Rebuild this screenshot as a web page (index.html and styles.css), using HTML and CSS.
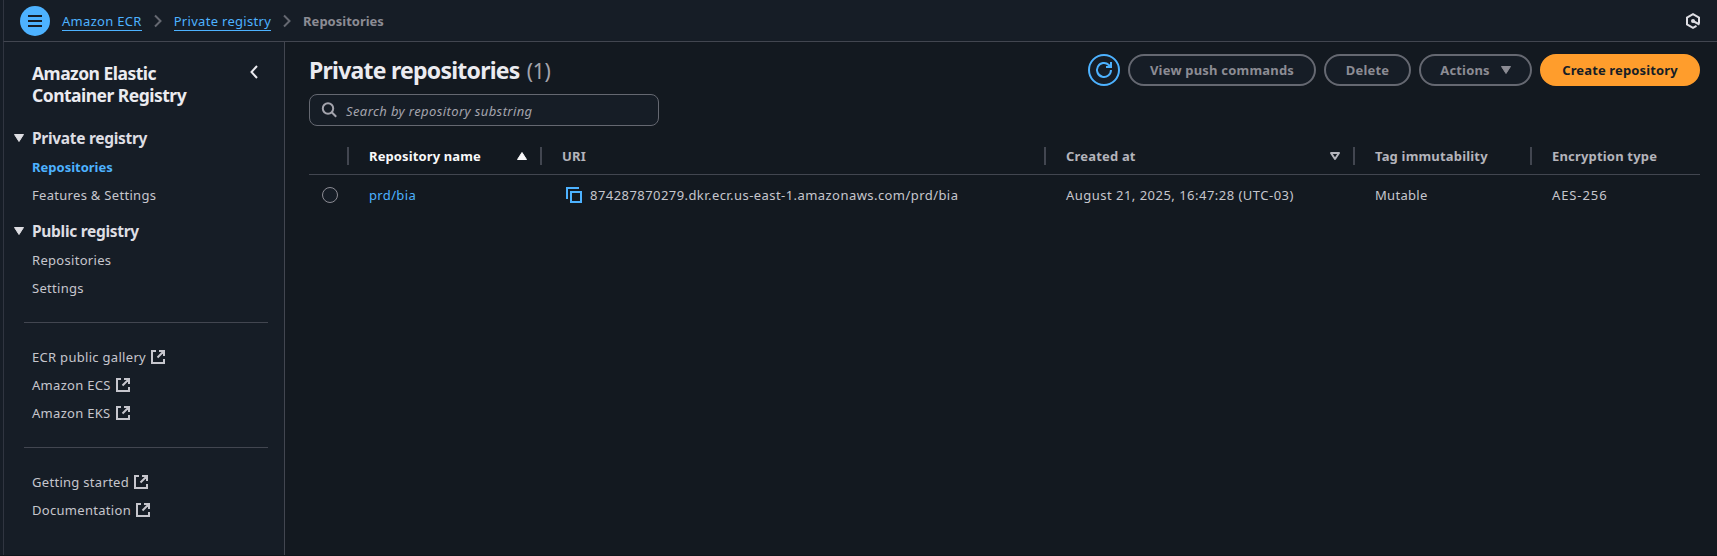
FILE: index.html
```html
<!DOCTYPE html>
<html lang="en">
<head>
<meta charset="utf-8">
<title>Private repositories</title>
<link rel="stylesheet" href="styles.css">
</head>
<body>
<svg width="0" height="0" class="defs" aria-hidden="true">
  <symbol id="external" viewBox="0 0 16 16"><path d="M6 2H2v12h12v-4M9 2h5v5M13.500 2.500 7.500 8.500" fill="none" stroke="currentColor" stroke-width="2"/></symbol>
  <symbol id="down" viewBox="0 0 10 8"><path d="M.5.5h9L5 7.500z" fill="currentColor" stroke="currentColor" stroke-linejoin="round"/></symbol>
  <symbol id="chevron" viewBox="0 0 8 14"><path d="m1 1.500 5.500 5.500L1 12.500" fill="none" stroke="currentColor" stroke-width="2"/></symbol>
</svg>
<div class="app">
  <header class="topbar">
    <button class="menu" aria-label="Menu"><svg width="14" height="12" viewBox="0 0 14 12"><path d="M0 1h14M0 6h14M0 11h14" stroke="#161d26" stroke-width="2"/></svg></button>
    <nav class="crumbs">
      <a class="crumb">Amazon ECR</a>
      <svg class="sep" width="8" height="14"><use href="#chevron"/></svg>
      <a class="crumb">Private registry</a>
      <svg class="sep" width="8" height="14"><use href="#chevron"/></svg>
      <span class="current">Repositories</span>
    </nav>
    <svg class="assist" width="16" height="16" viewBox="0 0 16 16"><path d="M14 10.500v-6L8 1.200 2 4.500v7l6 3.300 3.500-2" fill="none" stroke="currentColor" stroke-width="2"/><path d="M8 8l6.500 3.500" stroke="currentColor" stroke-width="2"/><circle cx="8" cy="8" r="2" fill="currentColor"/></svg>
  </header>
  <div class="body">
    <aside class="sidebar">
      <div class="service"><h2>Amazon Elastic<br>Container Registry</h2>
        <svg class="collapse" width="8" height="14" viewBox="0 0 8 14"><path d="M7 1 1.500 7 7 13" fill="none" stroke="currentColor" stroke-width="2"/></svg></div>
      <h3 class="group"><svg width="10" height="8"><use href="#down"/></svg><span>Private registry</span></h3>
      <a class="link active">Repositories</a>
      <a class="link">Features &amp; Settings</a>
      <h3 class="group second"><svg width="10" height="8"><use href="#down"/></svg><span>Public registry</span></h3>
      <a class="link">Repositories</a>
      <a class="link">Settings</a>
      <hr>
      <a class="link"><span>ECR public gallery</span><svg width="16" height="16"><use href="#external"/></svg></a>
      <a class="link"><span>Amazon ECS</span><svg width="16" height="16"><use href="#external"/></svg></a>
      <a class="link"><span>Amazon EKS</span><svg width="16" height="16"><use href="#external"/></svg></a>
      <hr>
      <a class="link"><span>Getting started</span><svg width="16" height="16"><use href="#external"/></svg></a>
      <a class="link"><span>Documentation</span><svg width="16" height="16"><use href="#external"/></svg></a>
    </aside>
    <main class="main">
      <div class="heading">
        <h1>Private repositories <span class="count">(1)</span></h1>
        <div class="actions">
          <button class="btn refresh" aria-label="Refresh"><svg width="16" height="16" viewBox="0 0 16 16"><path d="M15 8a7 7 0 1 1-2.200-5.100L15 5M15 0v5h-5" fill="none" stroke="currentColor" stroke-width="2"/></svg></button>
          <button class="btn push">View push commands</button>
          <button class="btn delete">Delete</button>
          <button class="btn more">Actions <svg width="10" height="8"><use href="#down"/></svg></button>
          <button class="btn create">Create repository</button>
        </div>
      </div>
      <div class="search"><svg width="16" height="16" viewBox="0 0 16 16"><circle cx="7" cy="6.500" r="5.200" fill="none" stroke="currentColor" stroke-width="2"/><path d="m10.500 10 4.700 4.700" stroke="currentColor" stroke-width="2"/></svg><span>Search by repository substring</span></div>
      <div class="table">
        <div class="row head">
          <div class="cell"></div>
          <div class="cell sorted"><span>Repository name</span><svg width="12" height="10" viewBox="0 0 12 10"><path d="M6 1.500 10.500 8.500h-9z" fill="currentColor" stroke="currentColor" stroke-linejoin="round"/></svg></div>
          <div class="cell"><span>URI</span></div>
          <div class="cell"><span>Created at</span><svg width="12" height="10" viewBox="0 0 12 10"><path d="M2 2h8L6 8z" fill="none" stroke="currentColor" stroke-width="2" stroke-linejoin="round"/></svg></div>
          <div class="cell"><span>Tag immutability</span></div>
          <div class="cell"><span>Encryption type</span></div>
        </div>
        <div class="row data">
          <div class="cell"><i class="radio"></i></div>
          <div class="cell"><a class="repo">prd/bia</a></div>
          <div class="cell"><svg class="copy" width="16" height="16" viewBox="0 0 16 16"><path d="M1 12V1h12M5 5h10v10H5z" fill="none" stroke="currentColor" stroke-width="2"/></svg><span class="uri">874287870279.dkr.ecr.us-east-1.amazonaws.com/prd/bia</span></div>
          <div class="cell"><span class="date">August 21, 2025, 16:47:28 (UTC-03)</span></div>
          <div class="cell"><span>Mutable</span></div>
          <div class="cell"><span class="enc">AES-256</span></div>
        </div>
      </div>
    </main>
  </div>
</div>
</body>
</html>
```
FILE: styles.css
```css
* { box-sizing: border-box; }
body { margin: 0; background: #161d26; color: #c6c6cd; font: 13px/20px "Noto Sans", sans-serif; letter-spacing: .3px; }
.defs { display: block; width: 0; height: 0; }
.app { width: 1717px; height: 556px; padding-left: 3px; border-bottom: 1px solid #0f141a; overflow: hidden; display: flex; flex-direction: column; }
button { font: inherit; letter-spacing: .2px; cursor: pointer; }
svg { flex: none; overflow: visible; }
.topbar { height: 42px; display: flex; align-items: center; padding: 0 16px; border-bottom: 1px solid #424650; border-left: 1px solid #303540; }
.menu { width: 30px; height: 30px; border: 0; border-radius: 50%; background: #4db2ff; display: grid; place-items: center; padding: 0; }
.crumbs { display: flex; align-items: center; margin-left: 12px; flex: 1; }
.crumb { color: #4db2ff; height: 20px; line-height: 21px; border-bottom: 1px solid #4db2ff; }
.sep { color: #656871; margin: 0 12px; }
.current { color: #8c8c94; font-weight: 700; line-height: 22px; letter-spacing: 0; }
.assist { color: #dedee3; }
.body { flex: 1; display: flex; min-height: 0; }
.sidebar { width: 282px; border-left: 1px solid #303540; border-right: 1px solid #424650; padding: 21px 16px 0 28px; }
.service { display: flex; justify-content: space-between; height: 64px; padding-right: 10px; color: #ebebf0; }
h1, h2, h3 { margin: 0; }
h2 { margin-top: -1px; font-size: 17.500px; line-height: 22px; letter-spacing: -.52px; }
.collapse { margin-top: 2px; }
.group { display: flex; align-items: center; gap: 8px; margin-left: -18px; height: 22px; font-size: 15.500px; letter-spacing: -.3px; color: #dedee3; }
.link { display: flex; align-items: center; gap: 4px; height: 20px; margin-top: 8px; }
.active { color: #4db2ff; font-weight: 700; letter-spacing: 0; }
.second { margin-top: 15px; }
hr { border: 0; border-top: 1px solid #424650; margin: 24px 0 24px -8px; }
.main { flex: 1; background: #131920; padding: 12px 17px 0 24px; }
.heading { display: flex; justify-content: space-between; height: 32px; }
h1 { font-size: 23px; line-height: 32px; color: #ebebf0; letter-spacing: -.76px; }
.count { font-weight: 400; font-size: 21px; margin-left: 2px; letter-spacing: -.3px; color: #a4a4ad; }
.actions { display: flex; gap: 8px; }
.btn { height: 32px; border: 2px solid #656871; border-radius: 16px; background: #161d26; color: #8c8c94; font-weight: 700; padding: 0 20px; display: flex; align-items: center; justify-content: center; white-space: nowrap; }
.refresh { width: 32px; padding: 0; color: #4db2ff; border-color: #4db2ff; }
.push { width: 188px; }
.delete { width: 87px; }
.more { width: 113px; gap: 11px; letter-spacing: .15px; }
.create { width: 160px; background: #ff9d2c; border-color: #ff9d2c; color: #161d26; letter-spacing: .14px; }
.search { margin-top: 8px; width: 350px; height: 32px; border: 1px solid #656871; border-radius: 8px; background: #161d26; display: flex; align-items: center; gap: 9px; padding-left: 11px; font-style: italic; letter-spacing: .4px; color: #a4a4ad; }
.search span { padding-top: 2px; }
.table { margin-top: 10px; }
.row { display: grid; grid-template-columns: 39px 193px 504px 309px 177px 1fr; height: 40px; }
.head { height: 39px; border-bottom: 1px solid #424650; font-weight: 700; letter-spacing: .18px; color: #b4b4bb; }
.cell { display: flex; align-items: center; padding-left: 21px; }
.cell:first-child { padding-left: 13px; }
.head .cell { position: relative; justify-content: space-between; padding-top: 2px; padding-right: 13px; }
.head .cell:not(:last-child)::after { content: ""; position: absolute; top: 11px; right: -1px; width: 2px; height: 18px; background: #424650; }
.sorted { color: #f9f9fa; letter-spacing: .12px; }
.radio { width: 16px; height: 16px; border: 1px solid #8c8c94; border-radius: 50%; background: #161d26; }
.repo { color: #4db2ff; letter-spacing: .35px; }
.copy { color: #4db2ff; margin: 0 8px 0 4px; }
.uri { letter-spacing: .44px; }
.date { letter-spacing: .48px; }
.enc { letter-spacing: .9px; }
```
